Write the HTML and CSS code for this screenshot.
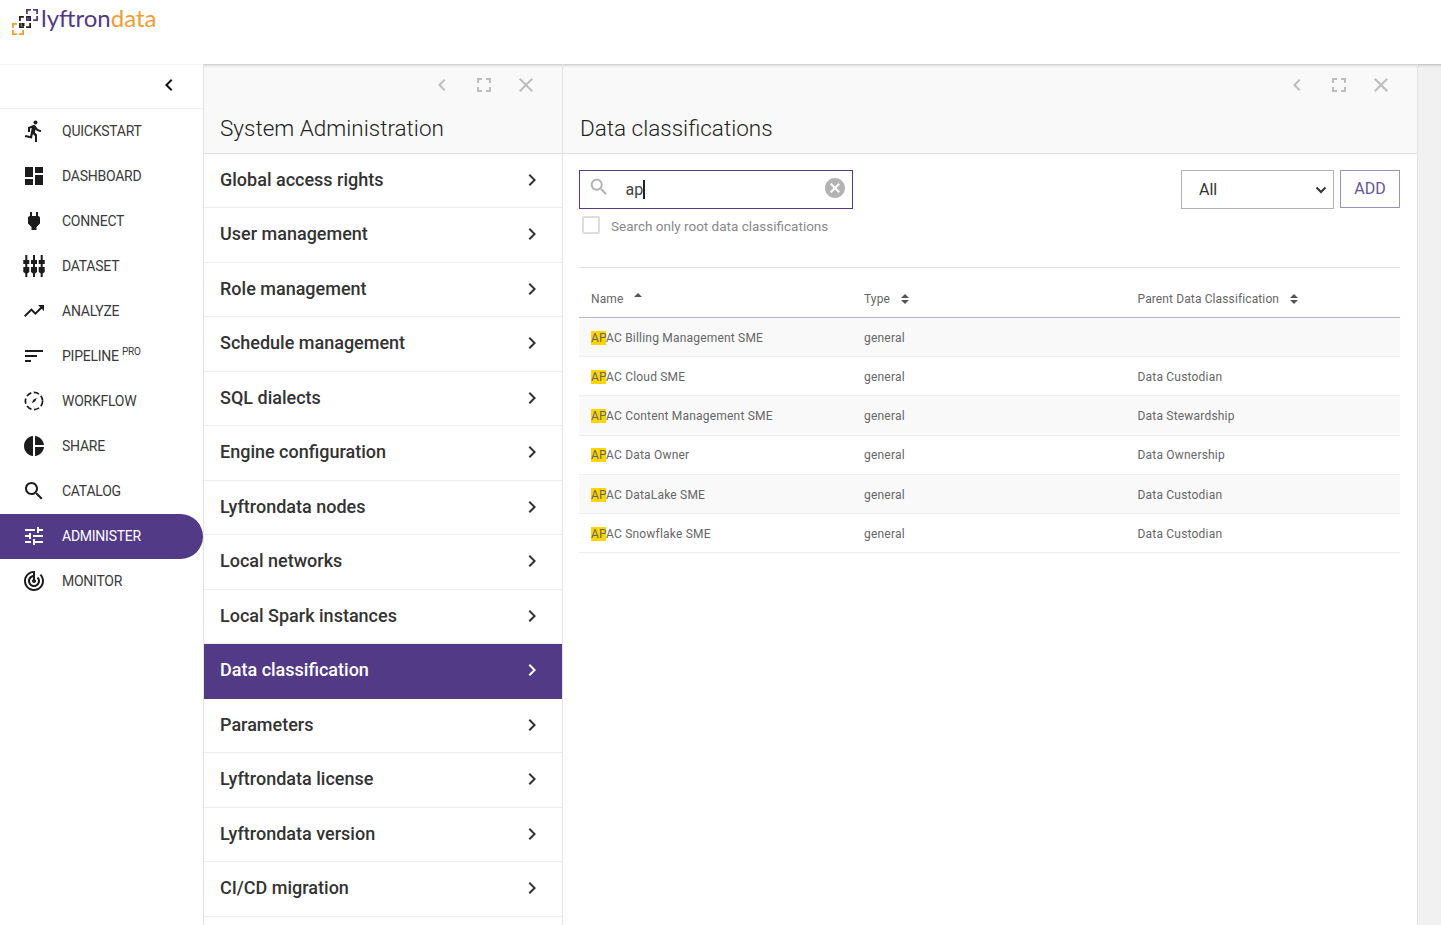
FILE: index.html
```html
<!DOCTYPE html>
<html lang="en">
<head>
<meta charset="utf-8">
<title>Lyftrondata - Data classifications</title>
<link rel="stylesheet" href="styles.css">
</head>
<body>
<svg class="defs" width="0" height="0" aria-hidden="true">
  <symbol id="i-run" viewBox="0 0 24 24"><path d="M13.49 5.48c1.1 0 2-.9 2-2s-.9-2-2-2-2 .9-2 2 .9 2 2 2zm-3.6 13.9l1-4.4 2.1 2v6h2v-7.5l-2.1-2 .6-3c1.3 1.5 3.3 2.5 5.5 2.5v-2c-1.9 0-3.5-1-4.3-2.4l-1-1.6c-.4-.6-1-1-1.7-1-.3 0-.5.1-.8.1l-5.2 2.2v4.7h2v-3.4l1.8-.7-1.6 8.1-4.9-1-.4 2 7 1.4z"/></symbol>
  <symbol id="i-dash" viewBox="0 0 24 24"><path d="M3 13h8V3H3v10zm0 8h8v-6H3v6zm10 0h8V11h-8v10zm0-18v6h8V3h-8z"/></symbol>
  <symbol id="i-plug" viewBox="0 0 24 24"><path d="M16.01 7L16 3h-2v4h-4V3H8v4h-.01C7 6.99 6 7.99 6 8.99v5.49L9.5 18v3h5v-3l3.5-3.51v-5.5c0-1-1-2-1.99-1.99z"/></symbol>
  <symbol id="i-data" viewBox="0 0 24 24"><path d="M3.300 1h2v5h2v4h-2v3h2v5l-2 1.500V23h-2v-3.500l-2-1.500v-5h2v-3h-2V6h2zM11 1h2v5h2v4h-2v3h2v5l-2 1.500V23h-2v-3.500L9 18v-5h2v-3H9V6h2zM18.700 1h2v5h2v4h-2v3h2v5l-2 1.500V23h-2v-3.500l-2-1.500v-5h2v-3h-2V6h2z"/></symbol>
  <symbol id="i-trend" viewBox="0 0 24 24"><path d="M16 6l2.290 2.290-4.880 4.880-4-4L2 16.590 3.410 18l6-6 4 4 6.300-6.290L22 12V6z"/></symbol>
  <symbol id="i-sort" viewBox="0 0 24 24"><path d="M3 18h6v-2H3v2zM3 6v2h18V6H3zm0 7h12v-2H3v2z"/></symbol>
  <symbol id="i-flow" viewBox="0 0 24 24"><circle cx="12" cy="12" r="8.600" fill="none" stroke="currentColor" stroke-width="1.700" stroke-dasharray="5.500 2.500"/><path d="M9.800 14.200l1.400-3.500 3.700-2-1.800 3.900z"/></symbol>
  <symbol id="i-pie" viewBox="0 0 24 24"><path d="M11 2v20c-5.070-.5-9-4.790-9-10s3.930-9.500 9-10zm2.030 0v8.990H22c-.47-4.740-4.240-8.520-8.970-8.990zm0 11.010V22c4.740-.47 8.500-4.250 8.970-8.990h-8.970z"/></symbol>
  <symbol id="i-search" viewBox="0 0 24 24"><path d="M15.500 14h-.79l-.28-.27C15.410 12.590 16 11.110 16 9.500 16 5.910 13.090 3 9.500 3S3 5.910 3 9.500 5.910 16 9.500 16c1.610 0 3.090-.59 4.230-1.570l.27.28v.79l5 4.990L20.490 19l-4.990-5zm-6 0C7.010 14 5 11.990 5 9.500S7.010 5 9.500 5 14 7.010 14 9.500 11.990 14 9.500 14z"/></symbol>
  <symbol id="i-tune" viewBox="0 0 24 24"><path d="M3 17v2h6v-2H3zM3 5v2h10V5H3zm10 16v-2h8v-2h-8v-2h-2v6h2zM7 9v2H3v2h4v2h2V9H7zm14 4v-2H11v2h10zm-6-4h2V7h4V5h-4V3h-2v6z"/></symbol>
  <symbol id="i-radar" viewBox="0 0 24 24"><path d="M19.070 4.930l-1.410 1.410C19.100 7.790 20 9.790 20 12c0 4.420-3.580 8-8 8s-8-3.580-8-8c0-4.080 3.050-7.440 7-7.930v2.020C8.160 6.570 6 9.030 6 12c0 3.310 2.690 6 6 6s6-2.690 6-6c0-1.660-.67-3.160-1.760-4.240l-1.410 1.410C15.550 9.900 16 10.900 16 12c0 2.210-1.790 4-4 4s-4-1.790-4-4c0-1.860 1.280-3.410 3-3.860v2.140c-.6.350-1 .98-1 1.720 0 1.100.9 2 2 2s2-.9 2-2c0-.74-.4-1.380-1-1.720V2h-1C6.480 2 2 6.480 2 12s4.480 10 10 10 10-4.480 10-10c0-2.760-1.120-5.260-2.930-7.070z"/></symbol>
  <symbol id="i-right" viewBox="0 0 24 24"><path d="M10 6L8.590 7.410 13.170 12l-4.580 4.590L10 18l6-6z"/></symbol>
  <symbol id="i-left" viewBox="0 0 24 24"><path d="M15.410 7.410L14 6l-6 6 6 6 1.410-1.410L10.830 12z"/></symbol>
  <symbol id="i-full" viewBox="0 0 24 24"><path d="M7 14H5v5h5v-2H7v-3zm-2-4h2V7h3V5H5v5zm12 7h-3v2h5v-5h-2v3zM14 5v2h3v3h2V5h-5z"/></symbol>
  <symbol id="i-close" viewBox="0 0 24 24"><path d="M19 6.410L17.590 5 12 10.590 6.410 5 5 6.410 10.590 12 5 17.590 6.410 19 12 13.410 17.590 19 19 17.590 13.410 12z"/></symbol>
  <symbol id="i-cancel" viewBox="0 0 24 24"><path d="M12 2C6.470 2 2 6.470 2 12s4.470 10 10 10 10-4.470 10-10S17.530 2 12 2zm5 13.590L15.590 17 12 13.410 8.410 17 7 15.590 10.590 12 7 8.410 8.410 7 12 10.590 15.590 7 17 8.410 13.410 12 17 15.590z"/></symbol>
</svg>

<header class="topbar">
  <div class="logo">
    <svg class="logo-mark" width="30" height="28" viewBox="0 0 30 28" fill="none" stroke-width="1.800">
      <path stroke="#f39c2f" d="M1.900 18.900v-4h4M8.100 14.900h4v4M1.900 21.100v4h4M8.100 25.100h4v-4"/>
      <path stroke="#523a87" d="M15.900 4.900v-4h4M22.100 .9h4v4M26.100 7.100v4h-4M19.900 11.100h-4v-4"/>
      <path stroke="#222" d="M8.900 11.900v-4h4M15.100 7.900h4v4M19.100 14.100v4h-4M12.900 18.100h-4v-4"/>
      <rect x="10.500" y="14" width="3" height="3" fill="#222" stroke="none"/>
      <rect x="16.500" y="8" width="2.500" height="3" fill="#523a87" stroke="none"/>
    </svg>
    <span class="logo-text">lyftron<b>data</b></span>
  </div>
</header>

<main class="workspace">
  <nav class="sidebar">
    <div class="collapse"><svg class="ico"><use href="#i-left"/></svg></div>
    <a class="nav-item"><svg class="ico"><use href="#i-run"/></svg><span>QUICKSTART</span></a>
    <a class="nav-item"><svg class="ico"><use href="#i-dash"/></svg><span>DASHBOARD</span></a>
    <a class="nav-item"><svg class="ico"><use href="#i-plug"/></svg><span>CONNECT</span></a>
    <a class="nav-item"><svg class="ico"><use href="#i-data"/></svg><span>DATASET</span></a>
    <a class="nav-item"><svg class="ico"><use href="#i-trend"/></svg><span>ANALYZE</span></a>
    <a class="nav-item"><svg class="ico"><use href="#i-sort"/></svg><span>PIPELINE <sup>PRO</sup></span></a>
    <a class="nav-item"><svg class="ico"><use href="#i-flow"/></svg><span>WORKFLOW</span></a>
    <a class="nav-item"><svg class="ico"><use href="#i-pie"/></svg><span>SHARE</span></a>
    <a class="nav-item"><svg class="ico"><use href="#i-search"/></svg><span>CATALOG</span></a>
    <a class="nav-item active"><svg class="ico"><use href="#i-tune"/></svg><span>ADMINISTER</span></a>
    <a class="nav-item"><svg class="ico"><use href="#i-radar"/></svg><span>MONITOR</span></a>
  </nav>

  <section class="panel panel-menu">
    <div class="panel-head">
      <div class="panel-tools">
        <svg class="tool"><use href="#i-left"/></svg>
        <svg class="tool"><use href="#i-full"/></svg>
        <svg class="tool"><use href="#i-close"/></svg>
      </div>
      <h2>System Administration</h2>
    </div>
    <ul class="menu">
      <li>Global access rights<svg class="ico"><use href="#i-right"/></svg></li>
      <li>User management<svg class="ico"><use href="#i-right"/></svg></li>
      <li>Role management<svg class="ico"><use href="#i-right"/></svg></li>
      <li>Schedule management<svg class="ico"><use href="#i-right"/></svg></li>
      <li>SQL dialects<svg class="ico"><use href="#i-right"/></svg></li>
      <li>Engine configuration<svg class="ico"><use href="#i-right"/></svg></li>
      <li>Lyftrondata nodes<svg class="ico"><use href="#i-right"/></svg></li>
      <li>Local networks<svg class="ico"><use href="#i-right"/></svg></li>
      <li>Local Spark instances<svg class="ico"><use href="#i-right"/></svg></li>
      <li class="current">Data classification<svg class="ico"><use href="#i-right"/></svg></li>
      <li>Parameters<svg class="ico"><use href="#i-right"/></svg></li>
      <li>Lyftrondata license<svg class="ico"><use href="#i-right"/></svg></li>
      <li>Lyftrondata version<svg class="ico"><use href="#i-right"/></svg></li>
      <li>CI/CD migration<svg class="ico"><use href="#i-right"/></svg></li>
    </ul>
  </section>

  <section class="panel panel-detail">
    <div class="panel-head">
      <div class="panel-tools">
        <svg class="tool"><use href="#i-left"/></svg>
        <svg class="tool"><use href="#i-full"/></svg>
        <svg class="tool"><use href="#i-close"/></svg>
      </div>
      <h2>Data classifications</h2>
    </div>
    <div class="detail-body">
      <div class="filters">
        <div class="search-col">
          <div class="searchbox">
            <svg class="search-ico"><use href="#i-search"/></svg>
            <span class="search-value">ap</span><span class="caret"></span>
            <svg class="clear-ico"><use href="#i-cancel"/></svg>
          </div>
          <label class="check"><span class="checkbox"></span><span class="check-label">Search only root data classifications</span></label>
        </div>
        <div class="actions">
          <div class="select-wrap">
            <select class="type-select"><option>All</option></select>
            <svg class="select-arrow" width="12" height="8" viewBox="0 0 12 8"><path d="M1.500 1.500L6 6l4.500-4.500" fill="none" stroke="#333" stroke-width="2"/></svg>
          </div>
          <button class="add" type="button">ADD</button>
        </div>
      </div>
      <table class="grid">
        <thead>
          <tr>
            <th>Name<span class="sort only-up"></span></th>
            <th>Type<span class="sort"></span></th>
            <th>Parent Data Classification<span class="sort"></span></th>
          </tr>
        </thead>
        <tbody>
          <tr><td><mark>AP</mark>AC Billing Management SME</td><td>general</td><td></td></tr>
          <tr><td><mark>AP</mark>AC Cloud SME</td><td>general</td><td>Data Custodian</td></tr>
          <tr><td><mark>AP</mark>AC Content Management SME</td><td>general</td><td>Data Stewardship</td></tr>
          <tr><td><mark>AP</mark>AC Data Owner</td><td>general</td><td>Data Ownership</td></tr>
          <tr><td><mark>AP</mark>AC DataLake SME</td><td>general</td><td>Data Custodian</td></tr>
          <tr><td><mark>AP</mark>AC Snowflake SME</td><td>general</td><td>Data Custodian</td></tr>
        </tbody>
      </table>
    </div>
  </section>
  <div class="gutter"></div>
</main>
</body>
</html>
```
FILE: styles.css
```css
* { box-sizing: border-box; }
html, body { margin: 0; height: 100%; overflow: hidden; }
body { font-family: Roboto, "Liberation Sans", sans-serif; color: #222; background: #fff; }
.defs { position: absolute; }
.ico { width: 24px; height: 24px; fill: currentColor; flex: none; }

.topbar { height: 64px; padding: 6px 0 0 11px; }
.logo { display: flex; align-items: flex-start; }
.logo-mark { margin-top: 3px; flex: none; }
.logo-text { font-family: Lato, sans-serif; font-size: 24px; line-height: 26px; color: #523a87; margin-top: -1px; }
.logo-text b { font-weight: 400; color: #f39c2f; }

.workspace { display: flex; height: 861px; }

.sidebar { width: 203px; flex: none; color: #333; border-top: 1px solid #f6f6f6; }
.collapse { height: 43.500px; display: flex; align-items: center; justify-content: flex-end; padding: 0 22px 3px 0; border-bottom: 1px solid #f2f2f2; color: #111; }
.nav-item { height: 45px; display: flex; align-items: center; padding-left: 22px; gap: 16px; font-size: 14px; letter-spacing: -.25px; color: #3a3a3a; }
.nav-item .ico { color: #1c1c1c; }
.nav-item sup { font-size: 10px; line-height: 0; }
.nav-item.active { background: #523a87; color: #fff; border-radius: 0 23px 23px 0; }
.nav-item.active .ico { color: #fff; }

.panel { display: flex; flex-direction: column; min-width: 0; border-right: 1px solid #e3e3e3; }
.panel-menu { width: 360px; flex: none; border-left: 1px solid #e3e3e3; }
.panel-detail { flex: 1; }
.gutter { width: 23px; flex: none; background: #f1f1f1; box-shadow: inset 0 3px 3px -2px rgba(0,0,0,.25); }

.panel-head { height: 89.600px; flex: none; background: #f9f9f9; border-bottom: 1px solid #e0e0e0; padding-top: 9px; box-shadow: inset 0 3px 3px -2px rgba(0,0,0,.25); }
.panel-tools { display: flex; justify-content: flex-end; gap: 18px; padding-right: 24px; height: 24px; }
.tool { width: 24px; height: 24px; fill: #bdbdbd; }
.panel-head h2 { margin: 0; padding: 15px 0 0 16px; font-size: 22.500px; line-height: 32px; font-weight: 300; color: #222; }
.panel-detail h2 { padding-left: 17px; }

.menu { list-style: none; margin: 0; padding: 0; }
.menu li { height: 54.500px; display: flex; align-items: center; justify-content: space-between; padding: 0 18px 2.400px 16px; border-bottom: 1px solid #eee; font-size: 18px; font-weight: 500; color: #333; }
.menu li .ico { margin-top: 1.600px; }
.menu li.current { background: #523a87; color: #fff; border-bottom-color: #523a87; }

.detail-body { padding: 16.400px 17px 0 16px; }
.filters { display: flex; justify-content: space-between; align-items: flex-start; height: 98px; border-bottom: 1px solid #e0e0e0; }
.search-col { width: 274px; }
.searchbox { height: 39px; border: 1px solid #523a87; display: flex; align-items: center; padding: 0 5px 0 8px; position: relative; }
.search-ico { width: 22px; height: 22px; fill: #b0b0b0; margin-top: -4px; flex: none; }
.search-value { font-size: 16px; color: #444; margin-left: 15.500px; }
.caret { width: 1.500px; height: 19px; background: #222; }
.clear-ico { width: 24px; height: 24px; fill: #b3b3b3; margin-left: auto; margin-top: -3px; }
.check { display: flex; align-items: center; font-size: 13.500px; color: #888; margin-top: 7px; padding-left: 3px; }
.check-label { margin-top: 2px; }
.checkbox { width: 18px; height: 18px; border: 2px solid #ddd; border-radius: 2px; margin-right: 11px; }
.actions { display: flex; gap: 6px; align-items: flex-start; }
.select-wrap { position: relative; width: 153px; height: 39px; }
.type-select { appearance: none; width: 100%; height: 100%; padding-left: 17px; border: 1px solid #b3b3b3; border-radius: 0; background: #fff; font: 16px Roboto, sans-serif; color: #333; }
.select-arrow { position: absolute; right: 7px; top: 16px; pointer-events: none; }
.add { width: 60px; height: 38px; border: 1px solid #9b8fc4; background: #fff; color: #66559c; font: 16px Roboto, sans-serif; padding: 0; }

.grid { width: 821px; border-collapse: collapse; table-layout: fixed; font-size: 12px; letter-spacing: .2px; color: #666; }
.grid th:nth-child(1) { width: 273px; }
.grid th:nth-child(2) { width: 273.500px; }
.grid th { height: 49.500px; text-align: left; font-weight: 400; padding: 14px 12px 0; border-bottom: 1px solid #b8b0d0; letter-spacing: .12px; }
.grid td { height: 39.250px; padding: 1px 12px 0; border-bottom: 1px solid #eee; }
.grid tbody tr:nth-child(odd) { background: #f9f9f9; }
mark { background: #ffd500; color: inherit; }
.sort { display: inline-block; position: relative; width: 8px; height: 10px; margin-left: 11px; vertical-align: -1px; }
.sort::before, .sort::after { content: ""; position: absolute; left: 0; border: 4px solid transparent; }
.sort::before { top: -4px; border-bottom-color: #555; }
.sort::after { top: 6px; border-top-color: #555; }
.sort.only-up { vertical-align: 0; }
.sort.only-up::after { display: none; }
```
